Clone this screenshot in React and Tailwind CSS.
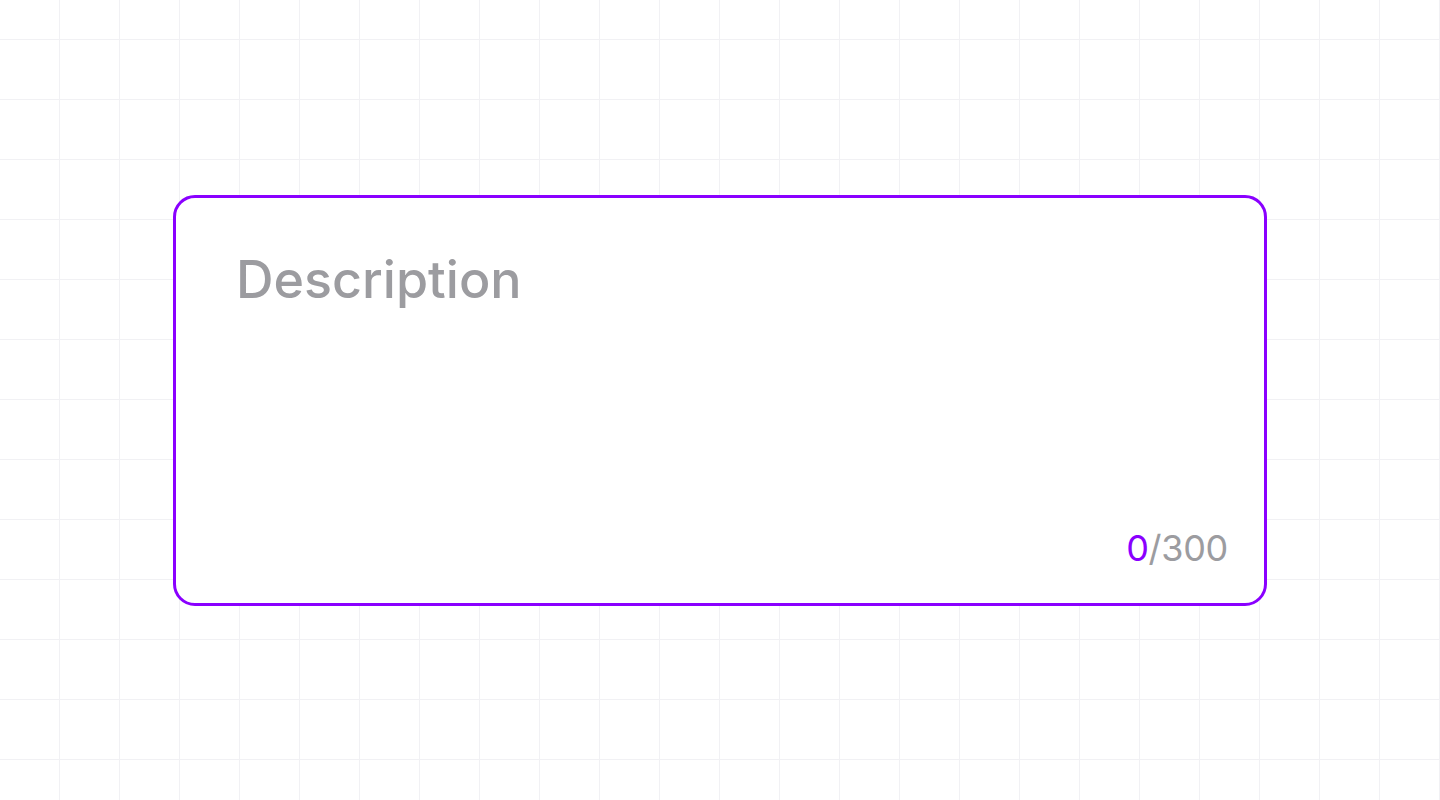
export default function App() {
  return (
    <div
      className="w-[1440px] h-[800px] flex items-center justify-center bg-white [background-image:linear-gradient(to_right,transparent_59px,#f1f1f4_59px),linear-gradient(to_bottom,transparent_59px,#f1f1f4_59px)] [background-size:60px_60px] [background-position:0_-20px]"
      style={{ fontFamily: 'Inter, "Noto Sans", sans-serif' }}
    >
      <div className="w-[1094px] h-[411px] bg-white border-[3px] border-[#8a00ff] rounded-[22px] flex flex-col justify-between pl-[60px] pr-[36px] pt-[52px] pb-[33px]">
        <div className="text-[52px] leading-[60px] font-medium text-[#9c9ca0]">Description</div>
        <div className="self-end text-[36px] leading-[44px] text-[#9c9ca0] tracking-[-0.3px]">
          <span className="text-[#8a00ff]">0</span>/300
        </div>
      </div>
    </div>
  );
}
